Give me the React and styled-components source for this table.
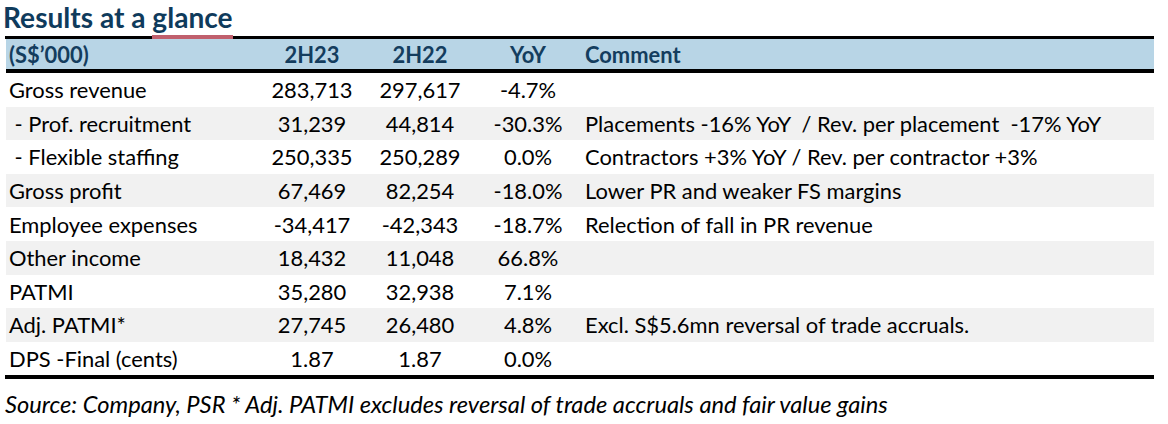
import React from "react";
import styled, { createGlobalStyle } from "styled-components";

const Global = createGlobalStyle`
  html, body { margin: 0; padding: 0; background: #fff; }
  body { font-family: Lato, "Liberation Sans", sans-serif; color: #000; }
`;

const Page = styled.div`
  width: 1168px;
  height: 424px;
  padding: 1px 14px 0 5px;
  box-sizing: border-box;
  overflow: hidden;
`;

const Title = styled.h1`
  margin: 0 0 0 -2px;
  height: 35px;
  font-size: 28.1px;
  line-height: 33px;
  font-weight: 700;
  color: #0f3b5c;
`;

const Accent = styled.span`
  position: relative;
  &::after {
    content: "";
    position: absolute;
    left: 0;
    right: 0;
    bottom: -5px;
    height: 4px;
    background: #c0606d;
    z-index: 1;
  }
`;

const Table = styled.div`
  border-top: 3px solid #000;
  border-bottom: 4px solid #000;
`;

const Row = styled.div`
  display: grid;
  grid-template-columns: 252px 108px 108px 108px 1fr;
  align-items: center;
  height: ${(p) => (p.$head ? "30px" : "33.6px")};
  margin-left: 1px;
  background: ${(p) => (p.$head ? "#b8d5e6" : p.$shade ? "#f1f1f1" : "#fff")};
  border-bottom: ${(p) => (p.$head ? "4px solid #000" : "none")};
  font-size: 21.9px;
  font-weight: ${(p) => (p.$head ? 700 : 400)};
  color: ${(p) => (p.$head ? "#143d5e" : "#000")};
`;

const Cell = styled.div`
  white-space: pre;
  text-align: ${(p) => p.$align || "left"};
  padding-left: ${(p) => (p.$align === "center" ? "0" : "3px")};
`;

const Footer = styled.div`
  margin-top: 11px;
  font-size: 23.7px;
  line-height: 28px;
  font-style: italic;
  white-space: pre;
`;

const rows = [
  ["Gross revenue", "283,713", "297,617", "-4.7%", ""],
  [" - Prof. recruitment", "31,239", "44,814", "-30.3%", "Placements -16% YoY  / Rev. per placement  -17% YoY"],
  [" - Flexible staffing", "250,335", "250,289", "0.0%", "Contractors +3% YoY / Rev. per contractor +3%"],
  ["Gross profit", "67,469", "82,254", "-18.0%", "Lower PR and weaker FS margins"],
  ["Employee expenses", "-34,417", "-42,343", "-18.7%", "Relection of fall in PR revenue"],
  ["Other income", "18,432", "11,048", "66.8%", ""],
  ["PATMI", "35,280", "32,938", "7.1%", ""],
  ["Adj. PATMI*", "27,745", "26,480", "4.8%", "Excl. S$5.6mn reversal of trade accruals."],
  ["DPS -Final (cents)", "1.87", "1.87", "0.0%", ""],
];

export default function App() {
  return (
    <Page>
      <Global />
      <Title>
        Results at a <Accent>glance</Accent>
      </Title>
      <Table>
        <Row $head>
          <Cell>(S$’000)</Cell>
          <Cell $align="center">2H23</Cell>
          <Cell $align="center">2H22</Cell>
          <Cell $align="center">YoY</Cell>
          <Cell>Comment</Cell>
        </Row>
        {rows.map((r, i) => (
          <Row key={i} $shade={i % 2 === 1}>
            <Cell>{r[0]}</Cell>
            <Cell $align="center">{r[1]}</Cell>
            <Cell $align="center">{r[2]}</Cell>
            <Cell $align="center">{r[3]}</Cell>
            <Cell>{r[4]}</Cell>
          </Row>
        ))}
      </Table>
      <Footer>Source: Company, PSR * Adj. PATMI excludes reversal of trade accruals and fair value gains</Footer>
    </Page>
  );
}
